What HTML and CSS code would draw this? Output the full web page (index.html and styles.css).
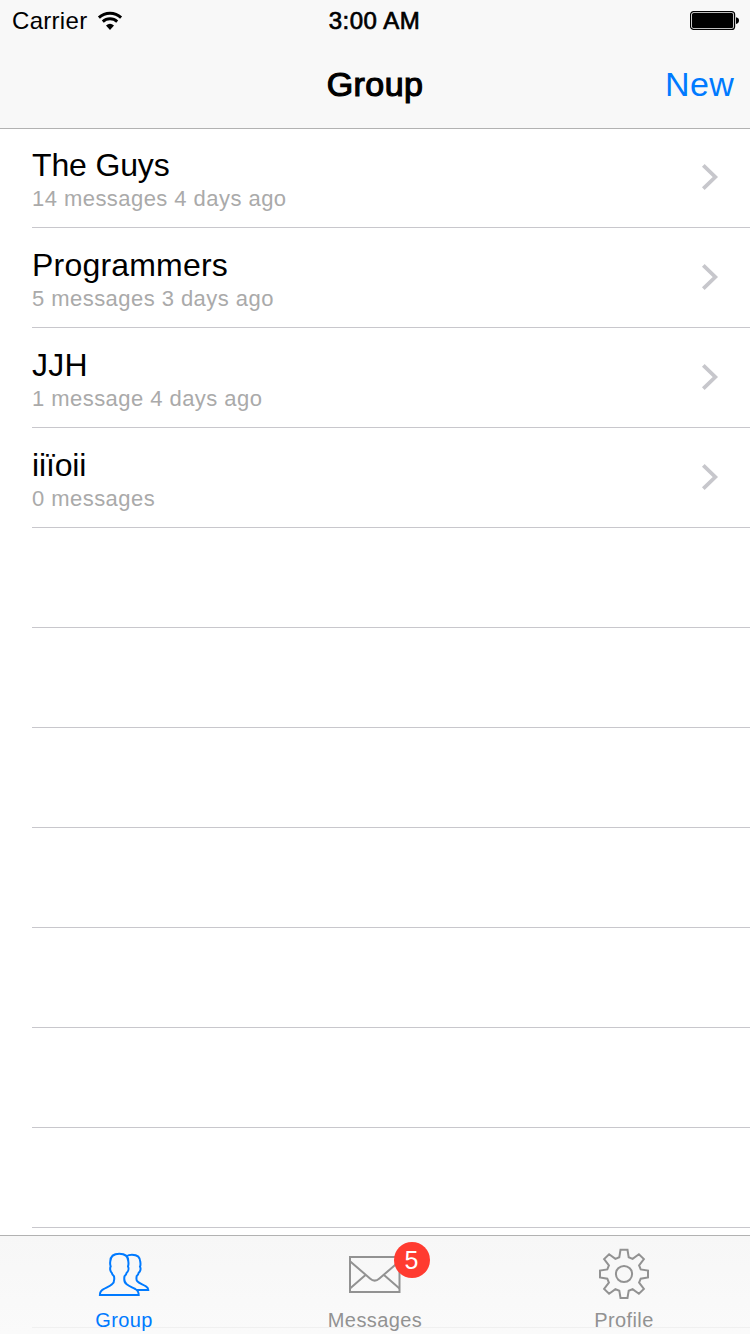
FILE: index.html
```html
<!DOCTYPE html>
<html lang="en">
<head>
<meta charset="utf-8">
<title>Group</title>
<link rel="stylesheet" href="styles.css">
</head>
<body>
<div class="screen">
  <header class="header">
    <div class="status">
      <div class="status-left">
        <span class="carrier">Carrier</span>
        <svg class="wifi" width="26" height="20" viewBox="0 0 26 20" fill="none" stroke="#000">
          <path d="M1.9 6.600A16.200 16.200 0 0 1 24.100 6.600" stroke-width="2.900"/>
          <path d="M5.800 10.600A10.700 10.700 0 0 1 20.200 10.600" stroke-width="2.900"/>
          <path d="M9 14.400A6.200 6.200 0 0 1 17 14.400L13 18.900Z" fill="#000" stroke="none"/>
        </svg>
      </div>
      <span class="clock">3:00 AM</span>
      <svg class="battery" width="50" height="20" viewBox="0 0 50 20">
        <rect x=".6" y=".6" width="44" height="17.8" rx="3" fill="#fff" stroke="#000" stroke-width="1.2"/>
        <rect x="2" y="2" width="41.2" height="15" rx="1.6"/>
        <path d="M46 6.2Q49 6.8 49 9.5T46 12.9Z"/>
      </svg>
    </div>
    <nav class="navbar">
      <span></span>
      <h1 class="nav-title">Group</h1>
      <a class="nav-action">New</a>
    </nav>
  </header>

  <main class="list">
    <div class="row">
      <div><div class="name tight">The Guys</div><div class="detail">14 messages 4 days ago</div></div>
      <svg class="chevron" width="18" height="28" viewBox="0 0 18 28"><path d="M2.300 2.300L14.300 14L2.300 25.700"/></svg>
    </div>
    <div class="row">
      <div><div class="name wide">Programmers</div><div class="detail">5 messages 3 days ago</div></div>
      <svg class="chevron" width="18" height="28" viewBox="0 0 18 28"><path d="M2.300 2.300L14.300 14L2.300 25.700"/></svg>
    </div>
    <div class="row">
      <div><div class="name wide">JJH</div><div class="detail">1 message 4 days ago</div></div>
      <svg class="chevron" width="18" height="28" viewBox="0 0 18 28"><path d="M2.300 2.300L14.300 14L2.300 25.700"/></svg>
    </div>
    <div class="row">
      <div><div class="name tight">iiïoii</div><div class="detail">0 messages</div></div>
      <svg class="chevron" width="18" height="28" viewBox="0 0 18 28"><path d="M2.300 2.300L14.300 14L2.300 25.700"/></svg>
    </div>
    <div class="row"></div>
    <div class="row"></div>
    <div class="row"></div>
    <div class="row"></div>
    <div class="row"></div>
    <div class="row"></div>
    <div class="row"></div>
  </main>

  <footer class="tabbar">
    <div class="tab active">
      <div class="icon">
        <svg width="54" height="54" viewBox="0 0 54 54">
          <path d="M2.900 49C2.900 46 4 44.500 6.500 43.200C9.500 41.500 13 40.300 15 38.300C17.300 36.500 17.500 33 17 30.300C16 29.500 15 28.500 14.700 26.700C13.300 25.500 12.600 22.500 13.700 20.300C12.900 18.500 13 17 13.300 15.300C13.500 10 16.500 7.800 22.300 7.800C28 7.800 31.200 10 31.300 15.300C31.600 17 31.700 18.500 31 20.300C32 22.500 31.300 25.500 29.700 26.700C29.400 28.500 28.500 29.500 27.500 30.300C27 33 27.200 36.500 29.700 38.300C32 40.300 35 41.300 38.300 43C41 44.500 41.700 46 41.700 49Z"/>
          <path d="M29.500 10.300C31 9.200 33 8.700 35 8.700C40.500 8.700 43.200 11 43.300 16C43.600 17.700 43.700 19 43 20.700C44.200 22.500 43.300 25.500 41.700 26.700C41.500 28.300 40.700 29.300 39.700 30C39.300 32 39.200 34 40.200 35.200C42 37.500 46 38.300 49 40.300C51 41.500 51.300 42.500 51.300 44H40"/>
        </svg>
      </div>
      <span class="label">Group</span>
    </div>
    <div class="tab">
      <div class="icon">
        <svg width="54" height="54" viewBox="0 0 54 54">
          <rect x="2" y="11" width="49.500" height="35"/>
          <path d="M2 15.200L22 32.500Q26.700 36.800 31.400 32.500L51.500 15.200M2 42.500L17.500 29M51.500 42.500L36 29"/>
        </svg>
        <span class="badge">5</span>
      </div>
      <span class="label">Messages</span>
    </div>
    <div class="tab">
      <div class="icon">
        <svg width="54" height="54" viewBox="0 0 54 54">
          <g transform="translate(0 .6)">
            <path d="M23.500 3.200H30.500L31.700 10.700L35.600 12.300L41.900 7.600L46.900 12.500L42.100 18.900L43.700 22.800L51 23.900V30.900L43.700 32.100L42.100 36L46.900 42.300L41.900 47.200L35.600 42.500L31.700 44.100L30.500 51.400H23.500L22.300 44.100L18.400 42.500L12.100 47.200L7.100 42.300L11.900 36L10.300 32.100L3 30.900V23.900L10.300 22.800L11.900 18.900L7.100 12.500L12.100 7.600L18.400 12.300L22.300 10.700Z"/>
            <circle cx="27" cy="27.400" r="8.100"/>
          </g>
        </svg>
      </div>
      <span class="label">Profile</span>
    </div>
  </footer>
</div>
</body>
</html>
```
FILE: styles.css
```css
* { box-sizing: border-box; }

body {
  margin: 0;
  background: #fff;
  color: #000;
  font-family: "Liberation Sans", Arial, sans-serif;
}

.screen {
  display: flex;
  flex-direction: column;
  height: 1334px;
  overflow: hidden;
}

.header {
  flex: none;
  height: 129px;
  background: #f8f8f8;
  border-bottom: 1px solid #b2b2b2;
}

.status {
  display: grid;
  grid-template-columns: 1fr auto 1fr;
  align-items: center;
  height: 40px;
  padding: 1px 10px 0 12px;
  font-size: 24px;
  line-height: 28px;
}

.status-left { display: flex; align-items: center; gap: 10px; }
.carrier { letter-spacing: 0.3px; }
.clock { margin-right: 3px; letter-spacing: 0.5px; -webkit-text-stroke: 0.7px #000; }
.battery { justify-self: end; }

.navbar {
  display: grid;
  grid-template-columns: 1fr auto 1fr;
  align-items: center;
  height: 88px;
  padding: 0 16px;
  font-size: 34px;
  line-height: 40px;
}

.nav-title {
  margin: 0;
  font-size: 34px;
  font-weight: 400;
  letter-spacing: 0.4px;
  -webkit-text-stroke: 1.2px #000;
}

.nav-action { justify-self: end; color: #007aff; letter-spacing: 0.3px; }

.list {
  flex: 1;
  min-height: 0;
  overflow: hidden;
}

.row {
  display: flex;
  justify-content: space-between;
  height: 100px;
  margin-left: 32px;
  padding: 19px 31px 0 0;
  border-bottom: 1px solid #c8c7cc;
}

.row:first-child { height: 99px; padding-top: 18px; }

.name { font-size: 32px; line-height: 36px; }
.name.wide { letter-spacing: 0.2px; }
.name.tight { letter-spacing: -0.15px; }
.detail { margin-top: 3px; font-size: 22px; line-height: 26px; letter-spacing: 0.45px; color: #aaa; }

.chevron {
  margin-top: 16px;
  fill: none;
  stroke: #c7c7cc;
  stroke-width: 3.8;
}

.tabbar {
  flex: none;
  display: grid;
  grid-template-columns: 1fr 1fr 1fr;
  height: 99px;
  border-top: 1px solid #b2b2b2;
  background: linear-gradient(#f0f0f0, #f0f0f0) 32px 91px / 718px 1px no-repeat, linear-gradient(#f7f7f7, #fafafa);
}

.tab {
  display: flex;
  flex-direction: column;
  align-items: center;
  padding-top: 10px;
  color: #929292;
}

.tab.active { color: #007aff; }
.tab:first-child,
.tab:last-child { padding-right: 2px; }

.icon { position: relative; height: 54px; }
.icon svg { display: block; fill: none; stroke: currentColor; stroke-width: 2; }

.label { margin-top: 8px; font-size: 20px; line-height: 24px; letter-spacing: 0.4px; }

.badge {
  position: absolute;
  top: -4px;
  left: 46px;
  width: 36px;
  height: 36px;
  padding-right: 1px;
  border-radius: 50%;
  background: #ff3b30;
  color: #fff;
  font-size: 25px;
  line-height: 37px;
  text-align: center;
}
```
